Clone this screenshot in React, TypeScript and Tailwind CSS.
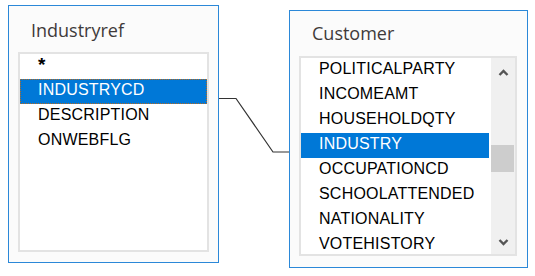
import React from "react";

const leftFields = ["*", "INDUSTRYCD", "DESCRIPTION", "ONWEBFLG"];
const rightFields = [
  "POLITICALPARTY",
  "INCOMEAMT",
  "HOUSEHOLDQTY",
  "INDUSTRY",
  "OCCUPATIONCD",
  "SCHOOLATTENDED",
  "NATIONALITY",
  "VOTEHISTORY",
];

const listFont = {
  fontFamily: '"Liberation Sans", Arial, sans-serif',
};

function Chevron({ down = false }: { down?: boolean }) {
  return (
    <svg width="11" height="8" viewBox="0 0 11 8">
      <polyline
        points={down ? "1.5,2 5.5,6 9.5,2" : "1.5,6 5.5,2 9.5,6"}
        fill="none"
        stroke="#555"
        strokeWidth="2.4"
      />
    </svg>
  );
}

function Row({
  label,
  selected,
  focused,
}: {
  label: string;
  selected?: boolean;
  focused?: boolean;
}) {
  const style = selected ? "bg-[#0078d7] text-white" : "text-black";
  const focus = focused ? "border border-dotted border-[#b86a1f]" : "border border-transparent";
  return (
    <div
      className={`h-[25px] pl-[17px] text-[16px] leading-[20px] tracking-[0.2px] whitespace-nowrap ${style} ${focus}`}
      style={listFont}
    >
      {label === "*" ? <span className="text-[19px] font-bold">*</span> : label}
    </div>
  );
}

export default function App() {
  return (
    <div
      className="relative flex items-start w-[535px] h-[276px] bg-white pl-[8px] overflow-hidden"
      style={{ fontFamily: '"Open Sans", "Noto Sans", sans-serif' }}
    >
      {/* Industryref table */}
      <div className="mt-[5px] w-[211px] h-[258px] shrink-0 border border-[#2b88d8] bg-[#fbfbfb] px-[9px] pt-[12px]">
        <div className="pl-[13px] h-[24px] text-[18px] leading-[24px] text-[#3f3a3a]">
          Industryref
        </div>
        <div className="mt-[10px] w-[191px] h-[200px] border-2 border-[#e3e3e3] bg-white">
          {leftFields.map((f) => (
            <Row
              key={f}
              label={f}
              selected={f === "INDUSTRYCD"}
              focused={f === "INDUSTRYCD"}
            />
          ))}
        </div>
      </div>

      {/* relationship line */}
      <svg width="70" height="276" className="shrink-0">
        <polyline
          points="0,98.5 17,98.5 54,152 70,152"
          fill="none"
          stroke="#333"
          strokeWidth="1.2"
        />
      </svg>

      {/* Customer table */}
      <div className="mt-[10px] w-[239px] h-[258px] shrink-0 border border-[#2b88d8] bg-[#fbfbfb] px-[9px] pt-[10px]">
        <div className="pl-[13px] h-[24px] text-[18px] leading-[24px] text-[#3f3a3a]">
          Customer
        </div>
        <div className="mt-[11px] w-[218px] h-[200px] border-2 border-[#e3e3e3] bg-white flex overflow-hidden">
          <div className="w-[188px] shrink-0">
            {rightFields.map((f) => (
              <Row key={f} label={f} selected={f === "INDUSTRY"} />
            ))}
          </div>
          <div className="ml-auto w-[24px] h-full bg-[#f0f0f0] flex flex-col">
            <div className="h-[30px] flex items-center justify-center">
              <Chevron />
            </div>
            <div className="mt-[57px] h-[27px] mr-[1px] bg-[#cdcdcd]" />
            <div className="flex-1" />
            <div className="h-[24px] flex items-center justify-center">
              <Chevron down />
            </div>
          </div>
        </div>
      </div>
    </div>
  );
}
